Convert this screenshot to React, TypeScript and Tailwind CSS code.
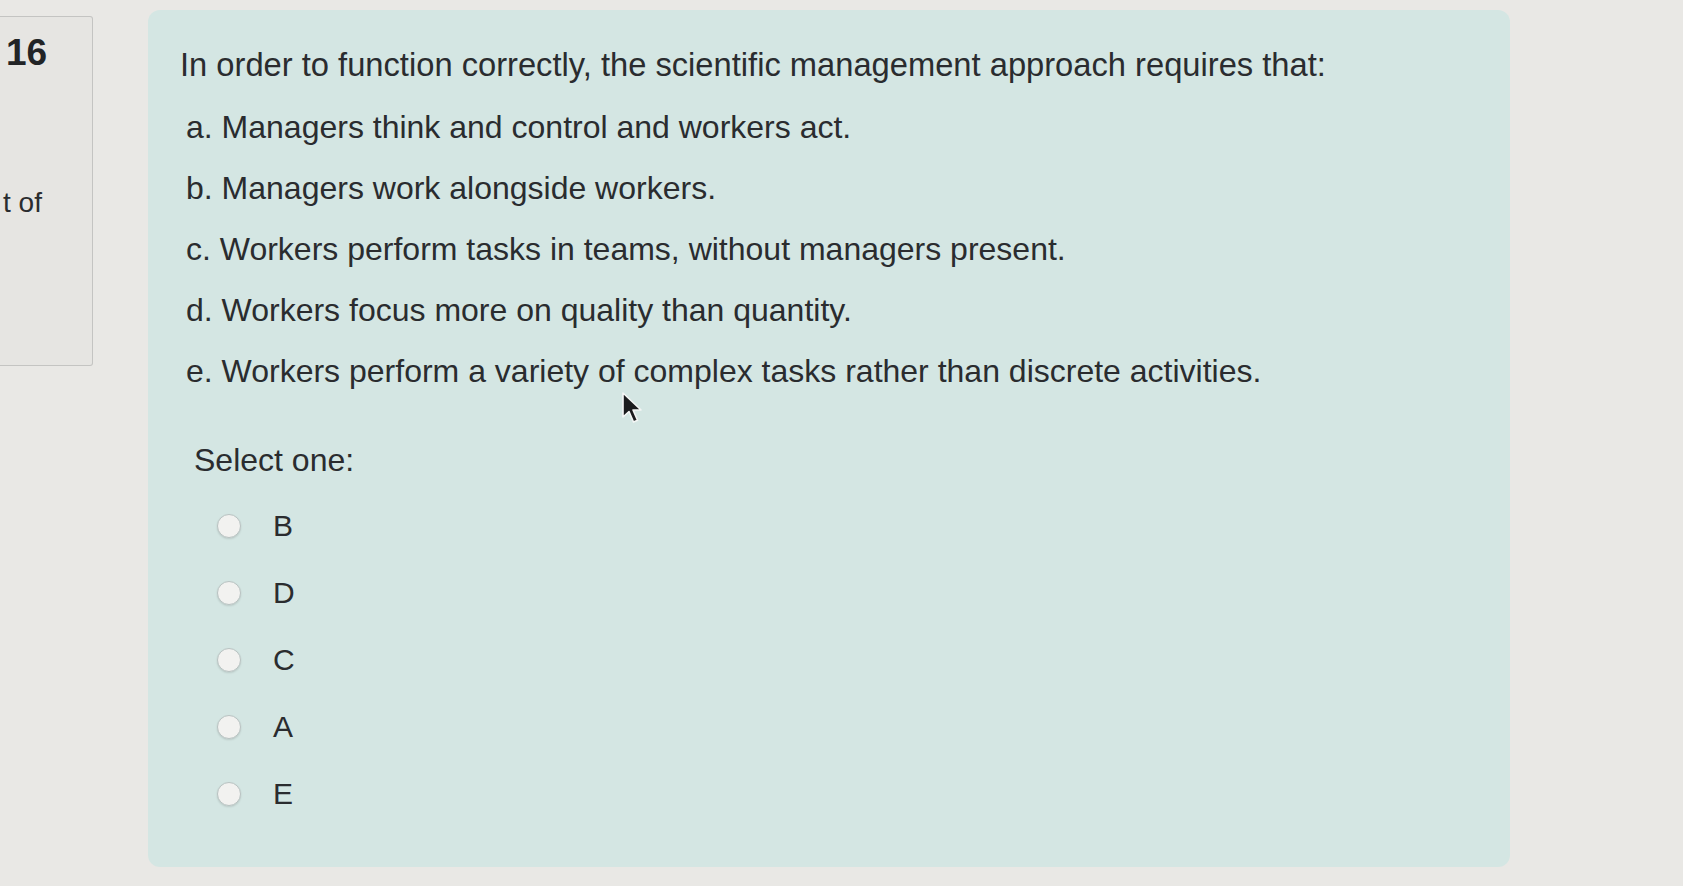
import React from 'react'

// 题目选项
const STATEMENTS = [
  'a. Managers think and control and workers act.',
  'b. Managers work alongside workers.',
  'c. Workers perform tasks in teams, without managers present.',
  'd. Workers focus more on quality than quantity.',
  'e. Workers perform a variety of complex tasks rather than discrete activities.',
]

const CHOICES = ['B', 'D', 'C', 'A', 'E']

export default function App() {
  return (
    <div
      className="relative flex items-start w-full h-[886px] overflow-hidden bg-[#e9e8e5] text-[#2a2c2f]"
      style={{ fontFamily: '"Liberation Sans", Arial, sans-serif' }}
    >
      {/* 左侧题号卡片 */}
      <div className="mt-[16px] w-[93px] h-[350px] shrink-0 bg-[#e6e5e2] border-t border-r border-b border-[#c4c4c2] rounded-br-[3px] rounded-tr-[3px]">
        <div className="pl-[6px] pt-[14px] text-[37px] leading-[44px] font-bold text-[#222426]">16</div>
        <div className="pl-[3px] mt-[112px] text-[28px] leading-[32px] text-[#2a2c2f]">t of</div>
      </div>

      {/* 题目面板 */}
      <div className="ml-[55px] mt-[10px] w-[1362px] h-[857px] shrink-0 rounded-[12px] bg-[#d4e6e3] pl-[32px] pt-[36px]">
        <p className="text-[32.7px] leading-[37px]">
          In order to function correctly, the scientific management approach requires that:
        </p>

        <div className="mt-[26px] pl-[6px] flex flex-col gap-[24px]">
          {STATEMENTS.map((s) => (
            <p key={s} className="text-[32px] leading-[37px]">
              {s}
            </p>
          ))}
        </div>

        <p className="mt-[52px] pl-[14px] text-[32px] leading-[37px]">Select one:</p>

        <div className="mt-[32px] pl-[37px] flex flex-col gap-[37px]">
          {CHOICES.map((c) => (
            <label key={c} className="flex items-center gap-[32px] h-[30px]">
              <span className="w-[24px] h-[24px] rounded-full bg-[#f2f2f0] border border-[#b9c3c2] shadow-[0_1px_2px_rgba(0,0,0,0.12)]" />
              <span className="text-[30px] leading-[30px]">{c}</span>
            </label>
          ))}
        </div>
      </div>

      {/* 鼠标指针 */}
      <svg
        className="absolute left-[620px] top-[391px]"
        width="22"
        height="34"
        viewBox="0 0 22 34"
      >
        <path
          d="M3 2 L3 26 L9 20.5 L13.5 31 L17.5 29.2 L13 19 L21 19 Z"
          fill="#1b1c1e"
          stroke="#f4f6f5"
          strokeWidth="1.6"
          strokeLinejoin="round"
        />
      </svg>
    </div>
  )
}
